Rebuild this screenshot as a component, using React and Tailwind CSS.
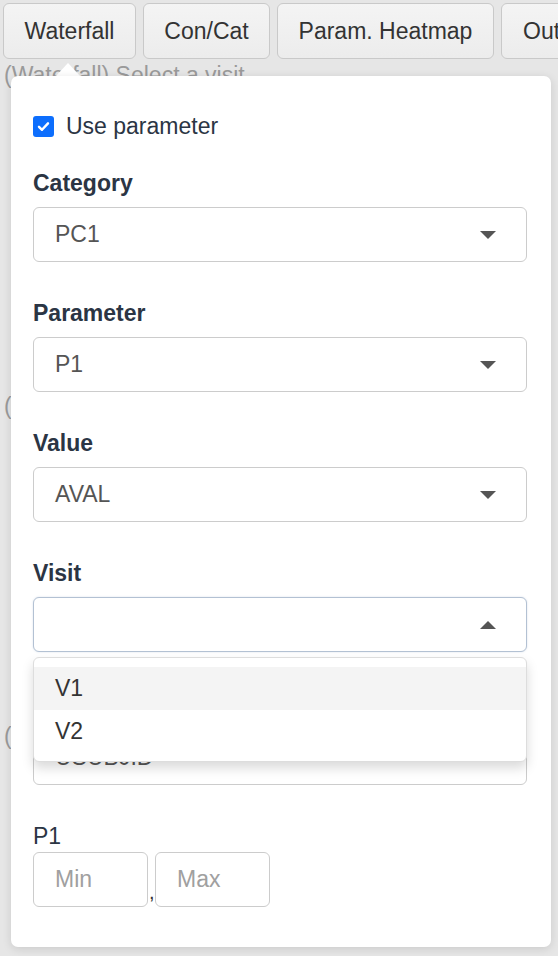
import React from "react";

function Caret({ up = false }) {
  return up ? (
    <div className="w-0 h-0 border-l-[8px] border-r-[8px] border-b-[8px] border-l-transparent border-r-transparent border-b-[#555]" />
  ) : (
    <div className="w-0 h-0 border-l-[8px] border-r-[8px] border-t-[8px] border-l-transparent border-r-transparent border-t-[#555]" />
  );
}

function Select({ value, focused = false, up = false }) {
  return (
    <div
      className={
        "h-[55px] w-full rounded-[6px] border bg-white flex items-center justify-between pl-[21px] pr-[30px] text-[23px] text-[#555] " +
        (focused ? "border-[#b3c1d3] shadow-[0_0_2px_rgba(100,130,170,0.25)]" : "border-[#cccccc]")
      }
    >
      <span>{value}</span>
      <Caret up={up} />
    </div>
  );
}

function Group({ label, children, extra = "" }) {
  return (
    <div className={"flex flex-col " + extra}>
      <div className="h-[32px] leading-[32px] text-[23px] font-bold text-[#2b3544] mb-[8.5px]">{label}</div>
      {children}
    </div>
  );
}

export default function App() {
  return (
    <div
      className="relative w-[558px] h-[956px] overflow-hidden bg-[#e6e6e6]"
      style={{ fontFamily: '"Liberation Sans", Arial, sans-serif' }}
    >
      {/* tabs */}
      <div className="flex gap-[7px] pl-[3px] pt-[3px] whitespace-nowrap">
        {[
          ["Waterfall", "w-[133px] justify-center"],
          ["Con/Cat", "w-[127px] justify-center"],
          ["Param. Heatmap", "w-[217px] justify-center"],
          ["Outliers", "px-[21px]"],
        ].map(([t, w]) => (
          <div
            key={t}
            className={
              w +
              " shrink-0 h-[56px] rounded-[6px] border border-[#c9c9c9] bg-gradient-to-b from-[#f4f4f4] to-[#ececec] flex items-center text-[23px] text-[#333]"
            }
          >
            {t}
          </div>
        ))}
      </div>

      {/* background help texts */}
      <div className="pl-[4px] text-[23px] text-[#9a9a9a] leading-[28px] mt-[2px]">(Waterfall) Select a visit</div>
      <div className="pl-[4px] text-[23px] text-[#9a9a9a] leading-[28px] mt-[303px]">(Con/Cat) Select a parameter</div>
      <div className="pl-[4px] text-[23px] text-[#9a9a9a] leading-[28px] mt-[302px]">(Heatmap) Select a subject</div>

      {/* popover arrow */}
      <div className="absolute left-[55px] top-[63px] w-0 h-0 border-l-[13px] border-r-[13px] border-b-[14px] border-l-transparent border-r-transparent border-b-white" />

      {/* popover card */}
      <div className="absolute left-[11px] top-[76px] w-[540px] h-[871px] bg-white rounded-[7px] shadow-[0_2px_10px_rgba(0,0,0,0.12)] pl-[22px] pr-[24px] pt-[36px] text-[#2b3544]">
        <div className="h-[28px] flex items-center gap-[12px]">
          <div className="w-[21px] h-[21px] rounded-[3px] bg-[#0d6efd] flex items-center justify-center">
            <svg width="15" height="15" viewBox="0 0 16 16" fill="none">
              <path d="M3.2 8.4 L6.4 11.5 L12.8 4.6" stroke="white" strokeWidth="2.6" strokeLinecap="round" strokeLinejoin="round" />
            </svg>
          </div>
          <span className="text-[23px] text-[#2b3544]">Use parameter</span>
        </div>

        <div className="flex flex-col gap-[34.5px] mt-[26.5px]">
          <Group label="Category">
            <Select value="PC1" />
          </Group>
          <Group label="Parameter">
            <Select value="P1" />
          </Group>
          <Group label="Value">
            <Select value="AVAL" />
          </Group>
          <Group label="Visit">
            <Select value="" focused up />
          </Group>
          <Group label="Subject" extra="mt-[3px]">
            <Select value="USUBJID" />
          </Group>
        </div>

        <div className="mt-[34.5px] h-[32px] leading-[32px] text-[23px] text-[#2b3544]">P1</div>
        <div className="flex items-end mt-[0.5px]">
          <div className="w-[115px] h-[55px] rounded-[6px] border border-[#cccccc] flex items-center pl-[21px] text-[23px] text-[#a0a0a0]">
            Min
          </div>
          <span className="w-[7px] text-[20px] leading-[30px] text-[#333] pl-[1px]">,</span>
          <div className="w-[115px] h-[55px] rounded-[6px] border border-[#cccccc] flex items-center pl-[21px] text-[23px] text-[#a0a0a0]">
            Max
          </div>
        </div>

        {/* open dropdown menu */}
        <div className="absolute left-[22px] top-[581px] w-[494px] h-[105px] bg-white rounded-[6px] border border-[#dddddd] shadow-[0_6px_12px_rgba(0,0,0,0.15)] pt-[9px]">
          <div className="h-[43px] bg-[#f4f4f4] flex items-center pl-[21px] text-[23px] text-[#333]">V1</div>
          <div className="h-[43px] flex items-center pl-[21px] text-[23px] text-[#333]">V2</div>
        </div>
      </div>
    </div>
  );
}
